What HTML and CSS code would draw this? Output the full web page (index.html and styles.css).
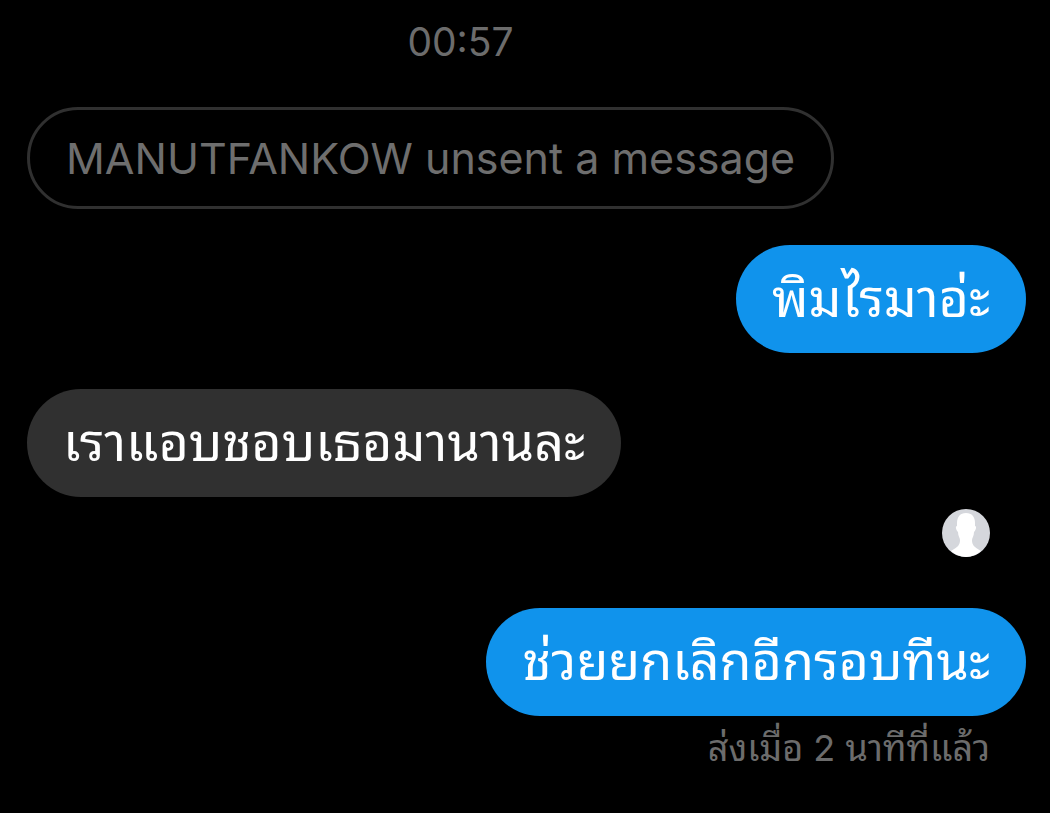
FILE: index.html
```html
<!DOCTYPE html>
<html lang="th">
<head>
<meta charset="utf-8">
<meta name="viewport" content="width=device-width, initial-scale=1">
<title>Chat</title>
<link rel="stylesheet" href="styles.css">
</head>
<body>
<main class="chat">
  <time class="time">00:57</time>
  <p class="bubble unsent">MANUTFANKOW unsent a message</p>
  <p class="bubble sent">พิมไรมาอ่ะ</p>
  <p class="bubble received">เราแอบชอบเธอมานานละ</p>
  <svg class="avatar" viewBox="0 0 48 48" role="img" aria-label="Seen">
    <circle cx="24" cy="24" r="24" fill="#d5d7dc"/>
    <path fill="#fff" d="M24 4c-6 0-9 4-9 10v3c-2 0-1 4 1 6 0 4 2 6 2 8 0 5-2 7-9 11A24 24 0 0 0 24 48a24 24 0 0 0 15-6c-7-4-9-6-9-11 0-2 2-4 2-8 2-2 3-6 1-6v-3c0-6-3-10-9-10z"/>
  </svg>
  <p class="bubble sent last">ช่วยยกเลิกอีกรอบทีนะ</p>
  <p class="status">ส่งเมื่อ 2 นาทีที่แล้ว</p>
</main>
</body>
</html>
```
FILE: styles.css
```css
* {
  box-sizing: border-box;
}

body {
  margin: 0;
  background: #000;
  font-family: Inter, Thonburi, "Noto Sans Thai Looped", "Noto Looped Thai", Loma, Garuda, Umpush, Waree, Laksaman, "Tlwg Typo", Norasi, "Droid Sans Thai", Tahoma, sans-serif;
}

.chat {
  display: flex;
  flex-direction: column;
  align-items: flex-start;
  padding: 18px 24px 36px 27px;
}

.time {
  align-self: center;
  margin-right: 132px;
  font-size: 39px;
  line-height: 48px;
  color: #6c6c6c;
}

.bubble {
  margin: 36px 0 0;
  padding: 0 36px;
  border-radius: 54px;
  font-size: 52px;
  line-height: 108px;
  color: #fff;
  white-space: nowrap;
}

.unsent {
  margin-top: 41px;
  border: 3px solid #303030;
  font-size: 43px;
  line-height: 96px;
  color: #6e6e6e;
}

.sent {
  align-self: flex-end;
  background: #1093ec;
}

.received {
  background: #303030;
}

.avatar {
  align-self: flex-end;
  width: 48px;
  height: 48px;
  margin: 12px 36px 0 0;
}

.last {
  margin-top: 51px;
}

.status {
  align-self: flex-end;
  margin: 6px 36px 0 0;
  font-size: 36px;
  line-height: 52px;
  color: #6c6c6c;
}
```
